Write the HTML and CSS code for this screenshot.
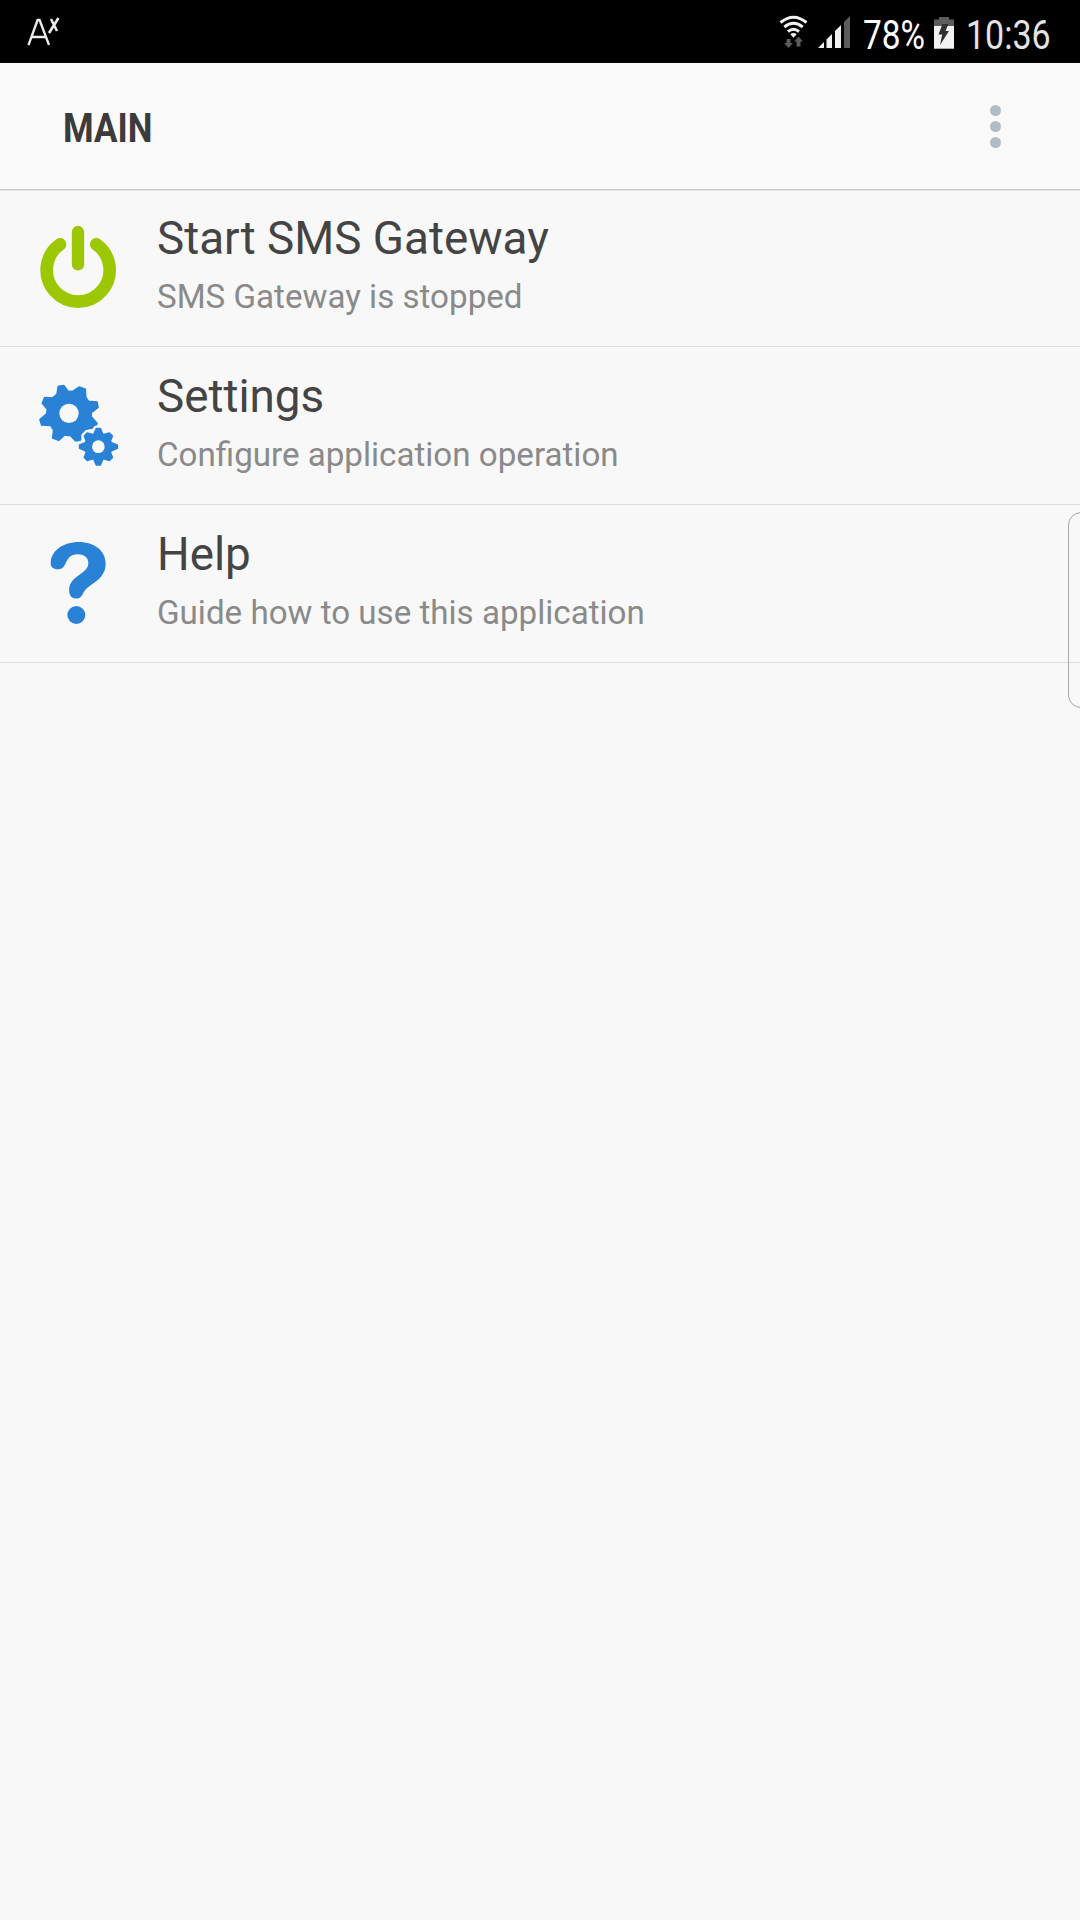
FILE: index.html
```html
<!DOCTYPE html>
<html lang="en">
<head>
    <meta charset="utf-8">
    <title>SMS Gateway</title>
    <link rel="stylesheet" href="styles.css">
</head>
<body>
    <div class="status-bar">
        <svg class="status-left" viewBox="0 0 120 63">
            <g fill="none" stroke="#ececec" stroke-width="2.3">
                <path d="M28.5 45 L37.6 20 H39.6 L49 45 M32 37 H46"/>
                <path d="M51 19 L57 31 M58.5 18 L49 33" stroke-width="2.6"/>
            </g>
        </svg>
        <svg class="status-icons" viewBox="776 0 80 63">
            <!-- wifi -->
            <g fill="none" stroke="#f2f2f2" stroke-width="3">
                <path d="M780.5 22.5 Q793.5 12 806.5 22.5"/>
                <path d="M784.3 27 Q793.5 19.5 802.7 27"/>
                <path d="M788 31.6 Q793.5 27 799 31.6"/>
            </g>
            <path d="M790.3 34.3 Q793.5 31.8 796.7 34.3 L793.5 37.7 Z" fill="#f2f2f2"/>
            <path d="M786.5 39 H790.5 V43 H793 L788.5 48 L784 43 H786.5 Z" fill="#5c5c5c"/>
            <path d="M796.5 46.5 H800.5 V41.5 H803 L798.5 36.5 L794 41.5 H796.5 Z" fill="#5c5c5c"/>
            <!-- signal -->
            <g fill="#efefef">
                <path d="M818 48 L824 42 V48 Z"/>
                <path d="M826.5 39.5 L832 34 V48 H826.5 Z"/>
                <path d="M835 31 L841 25 V48 H835 Z"/>
            </g>
            <path d="M844 22 L850 16 V48 H844 Z" fill="#5c5c5c"/>
        </svg>
        <span class="battery-text"><span class="condensed">78%</span></span>
        <svg class="battery" viewBox="0 0 20 63">
            <path d="M5 17 H15 V19.5 H20 V26 H0 V19.5 H5 Z" fill="#5c5c5c"/>
            <path d="M0 26 H20 V48.7 H0 Z" fill="#f2f2f2"/>
            <path d="M8.5 24 H14.5 L11.5 31 H15 L6 45 L8.2 34.5 H4.5 Z" fill="#303030"/>
        </svg>
        <span class="clock"><span class="condensed">10:36</span></span>
    </div>

    <div class="action-bar">
        <h1 class="title"><span class="condensed">MAIN</span></h1>
        <div class="overflow">
            <span class="dot"></span>
            <span class="dot"></span>
            <span class="dot"></span>
        </div>
    </div>

    <div class="menu">
        <div class="row">
            <svg class="icon" viewBox="0 0 360 360">
                <path d="M120 103 A94.5 94.5 0 1 0 229 103" fill="none" stroke="#9bc803" stroke-width="38" stroke-linecap="round"/>
                <path d="M174 66 V163" stroke="#9bc803" stroke-width="37" stroke-linecap="round"/>
            </svg>
            <div class="text">
                <div class="name">Start SMS Gateway</div>
                <div class="desc">SMS Gateway is stopped</div>
            </div>
        </div>
        <div class="row">
            <svg class="icon" viewBox="0 -6 360 360">
                <path class="gear" d="M115 49 L132 47 L143 63 L157 65 L178 51 L196 58 L197 82 L205 94 L231 96 L234 112 L214 128 L213 140 L231 160 L227 172 L205 176 L185 192 L181 210 L167 213 L152 197 L134 195 L116 211 L98 204 L101 180 L92 166 L65 165 L60 149 L80 132 L82 118 L67 100 L74 83 L98 84 L111 73 Z"/>
                <path class="halo" d="M229 176 H241 L248 192 L252 194 L268 189 L277 198 L271 213 L274 218 L292 225 V235 L274 242 L271 247 L277 262 L268 271 L252 266 L248 268 L241 285 H229 L222 268 L218 266 L202 271 L193 262 L199 247 L196 242 L179 235 V225 L196 218 L199 213 L193 198 L202 189 L218 194 L222 192 Z"/>
                <path class="gear" d="M229 176 H241 L248 192 L252 194 L268 189 L277 198 L271 213 L274 218 L292 225 V235 L274 242 L271 247 L277 262 L268 271 L252 266 L248 268 L241 285 H229 L222 268 L218 266 L202 271 L193 262 L199 247 L196 242 L179 235 V225 L196 218 L199 213 L193 198 L202 189 L218 194 L222 192 Z"/>
                <circle class="hole" cx="147" cy="130" r="29"/>
                <circle class="hole" cx="235" cy="230" r="19"/>
            </svg>
            <div class="text">
                <div class="name">Settings</div>
                <div class="desc">Configure application operation</div>
            </div>
        </div>
        <div class="row">
            <svg class="icon" viewBox="0 18 360 360">
                <path d="M92 130 C92 92 130 66 176 66 C224 66 257 92 257 132 C257 163 236 180 213 195 C195 207 193 214 187 224 C180 240 154 240 149 222 C143 198 154 182 172 169 C190 156 205 147 205 130 C205 112 192 103 173 103 C150 103 144 116 136 132 C129 146 121 148 113 148 C100 148 92 141 92 130 Z" fill="#2a82d7"/>
                <circle cx="169" cy="285" r="27" fill="#2a82d7"/>
            </svg>
            <div class="text">
                <div class="name">Help</div>
                <div class="desc">Guide how to use this application</div>
            </div>
        </div>
    </div>

    <div class="edge-handle"></div>
</body>
</html>
```
FILE: styles.css
```css
body {
    margin: 0;
    height: 1920px;
    position: relative;
    overflow: hidden;
    background: #f8f8f8;
    font-family: Roboto, sans-serif;
}
svg { display: block; }

.condensed {
    display: inline-block;
    transform-origin: left center;
    white-space: nowrap;
}

/* status bar */
.status-bar {
    height: 63px;
    display: flex;
    background: #000;
    color: #fff;
    font-size: 40px;
    line-height: 71px;
}
.status-left { width: 120px; height: 63px; margin-right: auto; }
.status-icons { width: 80px; height: 63px; margin-right: 7px; }
.battery-text { width: 71px; }
.battery-text .condensed { transform: scaleX(0.835); }
.battery { width: 20px; height: 63px; margin-right: 12px; }
.clock { width: 114px; color: #e4e4e4; }
.clock .condensed { transform: scaleX(0.85); }

/* action bar */
.action-bar {
    height: 126px;
    display: flex;
    align-items: center;
    justify-content: space-between;
    box-sizing: border-box;
    padding: 0 79px 0 63px;
    background: #fafafa;
    box-shadow: 0 1px 0 #c6c6c6, 0 2px 0 #e6e6e6;
}
.title {
    margin: 5px 0 0;
    color: #3b3b3b;
    font-size: 40px;
    font-weight: bold;
}
.title .condensed { transform: scaleX(0.875); }
.overflow {
    display: flex;
    flex-direction: column;
    gap: 5px;
}
.dot {
    width: 11px;
    height: 11px;
    border-radius: 50%;
    background: #b0bec3;
}

/* menu list */
.row {
    height: 158px;
    display: flex;
    box-sizing: border-box;
    padding-left: 20px;
    border-bottom: 1px solid #dcdcdc;
}
.icon { width: 120px; height: 120px; margin-top: 21px; }
.text { padding: 23px 0 0 17px; }
.name {
    color: #444;
    font-size: 45.8px;
    line-height: 54px;
}
.desc {
    margin-top: 11px;
    color: #8a8a8a;
    font-size: 33.15px;
    line-height: 40px;
}
.gear {
    fill: #2a82d7;
    stroke: #2a82d7;
    stroke-width: 5px;
    stroke-linejoin: round;
}
.halo {
    stroke: #f8f8f8;
    stroke-width: 19px;
    stroke-linejoin: round;
}
.hole { fill: #f8f8f8; }

/* edge panel handle */
.edge-handle {
    position: absolute;
    top: 512px;
    right: -14px;
    width: 26px;
    height: 196px;
    box-sizing: border-box;
    border: 1px solid #a8a8a8;
    border-radius: 14px;
}
```
